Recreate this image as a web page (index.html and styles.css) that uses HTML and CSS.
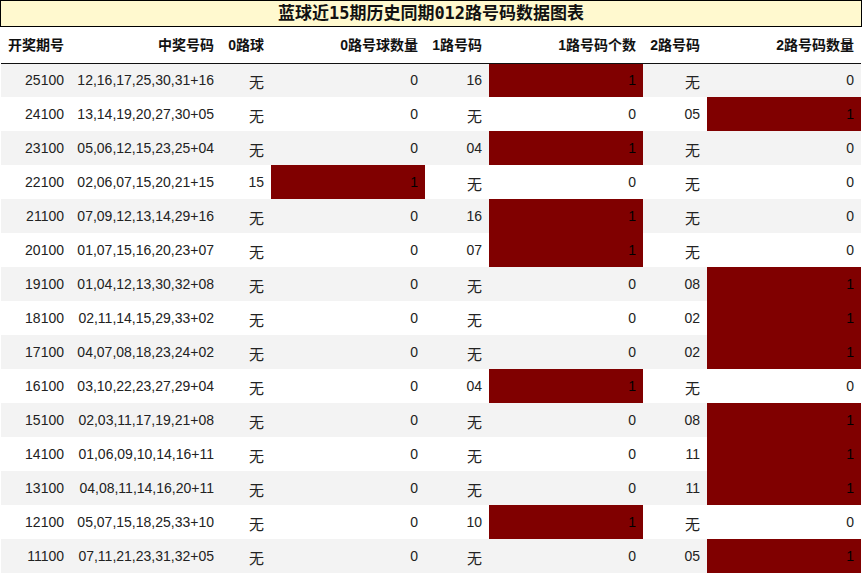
FILE: index.html
```html
<!DOCTYPE html>
<html lang="zh">
<head>
<meta charset="utf-8">
<title>蓝球近15期历史同期012路号码数据图表</title>
<link rel="stylesheet" href="styles.css">
</head>
<body>
<div class="title">蓝球近15期历史同期012路号码数据图表</div>
<table class="data">
<colgroup>
<col class="c1"><col class="c2"><col class="c3"><col class="c4"><col class="c5"><col class="c6"><col class="c7"><col class="c8">
</colgroup>
<thead>
<tr><th>开奖期号</th><th>中奖号码</th><th>0路球</th><th>0路号球数量</th><th>1路号码</th><th>1路号码个数</th><th>2路号码</th><th>2路号码数量</th></tr>
</thead>
<tbody>
<tr><td>25100</td><td>12,16,17,25,30,31+16</td><td class="cn">无</td><td>0</td><td>16</td><td class="hit">1</td><td class="cn">无</td><td>0</td></tr>
<tr><td>24100</td><td>13,14,19,20,27,30+05</td><td class="cn">无</td><td>0</td><td class="cn">无</td><td>0</td><td>05</td><td class="hit">1</td></tr>
<tr><td>23100</td><td>05,06,12,15,23,25+04</td><td class="cn">无</td><td>0</td><td>04</td><td class="hit">1</td><td class="cn">无</td><td>0</td></tr>
<tr><td>22100</td><td>02,06,07,15,20,21+15</td><td>15</td><td class="hit">1</td><td class="cn">无</td><td>0</td><td class="cn">无</td><td>0</td></tr>
<tr><td>21100</td><td>07,09,12,13,14,29+16</td><td class="cn">无</td><td>0</td><td>16</td><td class="hit">1</td><td class="cn">无</td><td>0</td></tr>
<tr><td>20100</td><td>01,07,15,16,20,23+07</td><td class="cn">无</td><td>0</td><td>07</td><td class="hit">1</td><td class="cn">无</td><td>0</td></tr>
<tr><td>19100</td><td>01,04,12,13,30,32+08</td><td class="cn">无</td><td>0</td><td class="cn">无</td><td>0</td><td>08</td><td class="hit">1</td></tr>
<tr><td>18100</td><td>02,11,14,15,29,33+02</td><td class="cn">无</td><td>0</td><td class="cn">无</td><td>0</td><td>02</td><td class="hit">1</td></tr>
<tr><td>17100</td><td>04,07,08,18,23,24+02</td><td class="cn">无</td><td>0</td><td class="cn">无</td><td>0</td><td>02</td><td class="hit">1</td></tr>
<tr><td>16100</td><td>03,10,22,23,27,29+04</td><td class="cn">无</td><td>0</td><td>04</td><td class="hit">1</td><td class="cn">无</td><td>0</td></tr>
<tr><td>15100</td><td>02,03,11,17,19,21+08</td><td class="cn">无</td><td>0</td><td class="cn">无</td><td>0</td><td>08</td><td class="hit">1</td></tr>
<tr><td>14100</td><td>01,06,09,10,14,16+11</td><td class="cn">无</td><td>0</td><td class="cn">无</td><td>0</td><td>11</td><td class="hit">1</td></tr>
<tr><td>13100</td><td>04,08,11,14,16,20+11</td><td class="cn">无</td><td>0</td><td class="cn">无</td><td>0</td><td>11</td><td class="hit">1</td></tr>
<tr><td>12100</td><td>05,07,15,18,25,33+10</td><td class="cn">无</td><td>0</td><td>10</td><td class="hit">1</td><td class="cn">无</td><td>0</td></tr>
<tr><td>11100</td><td>07,11,21,23,31,32+05</td><td class="cn">无</td><td>0</td><td class="cn">无</td><td>0</td><td>05</td><td class="hit">1</td></tr>
</tbody>
</table>
</body>
</html>
```
FILE: styles.css
```css
html, body {
  margin: 0;
  padding: 0;
  background: #ffffff;
}
body {
  width: 862px;
  font-family: "Liberation Sans", "Noto Sans CJK SC", sans-serif;
  font-size: 14px;
  color: #222;
}
.title {
  box-sizing: border-box;
  width: 862px;
  height: 27px;
  border: 1px solid #000;
  background: #fff9cf;
  text-align: center;
  font-family: "DejaVu Sans Mono", "Noto Sans CJK SC", monospace;
  font-weight: bold;
  font-size: 17px;
  line-height: 24px;
  color: #111;
}
.data {
  margin-left: 1px;
  width: 860px;
  table-layout: fixed;
  border-collapse: collapse;
  border-spacing: 0;
}
.c1 { width: 70px; }
.c2 { width: 150px; }
.c3 { width: 50px; }
.c4 { width: 154px; }
.c5 { width: 64px; }
.c6 { width: 154px; }
.c7 { width: 64px; }
.c8 { width: 154px; }
.data th {
  box-sizing: border-box;
  height: 36px;
  padding: 0 7px 0 0;
  line-height: 16px;
  text-align: right;
  font-weight: bold;
  color: #111;
  border-bottom: 1px solid #111;
  vertical-align: middle;
}
.data th:first-child {
  text-align: left;
  padding-left: 7px;
}
.data td {
  box-sizing: border-box;
  height: 34px;
  padding: 0 7px 0 0;
  line-height: 16px;
  text-align: right;
  vertical-align: middle;
  white-space: nowrap;
}
.data tbody tr:nth-child(odd) td {
  background: #f3f3f3;
}
.data tbody tr td.hit {
  background: #800000;
  color: #000;
}
.data td.cn {
  font-size: 15px;
  padding-top: 6px;
}
```
